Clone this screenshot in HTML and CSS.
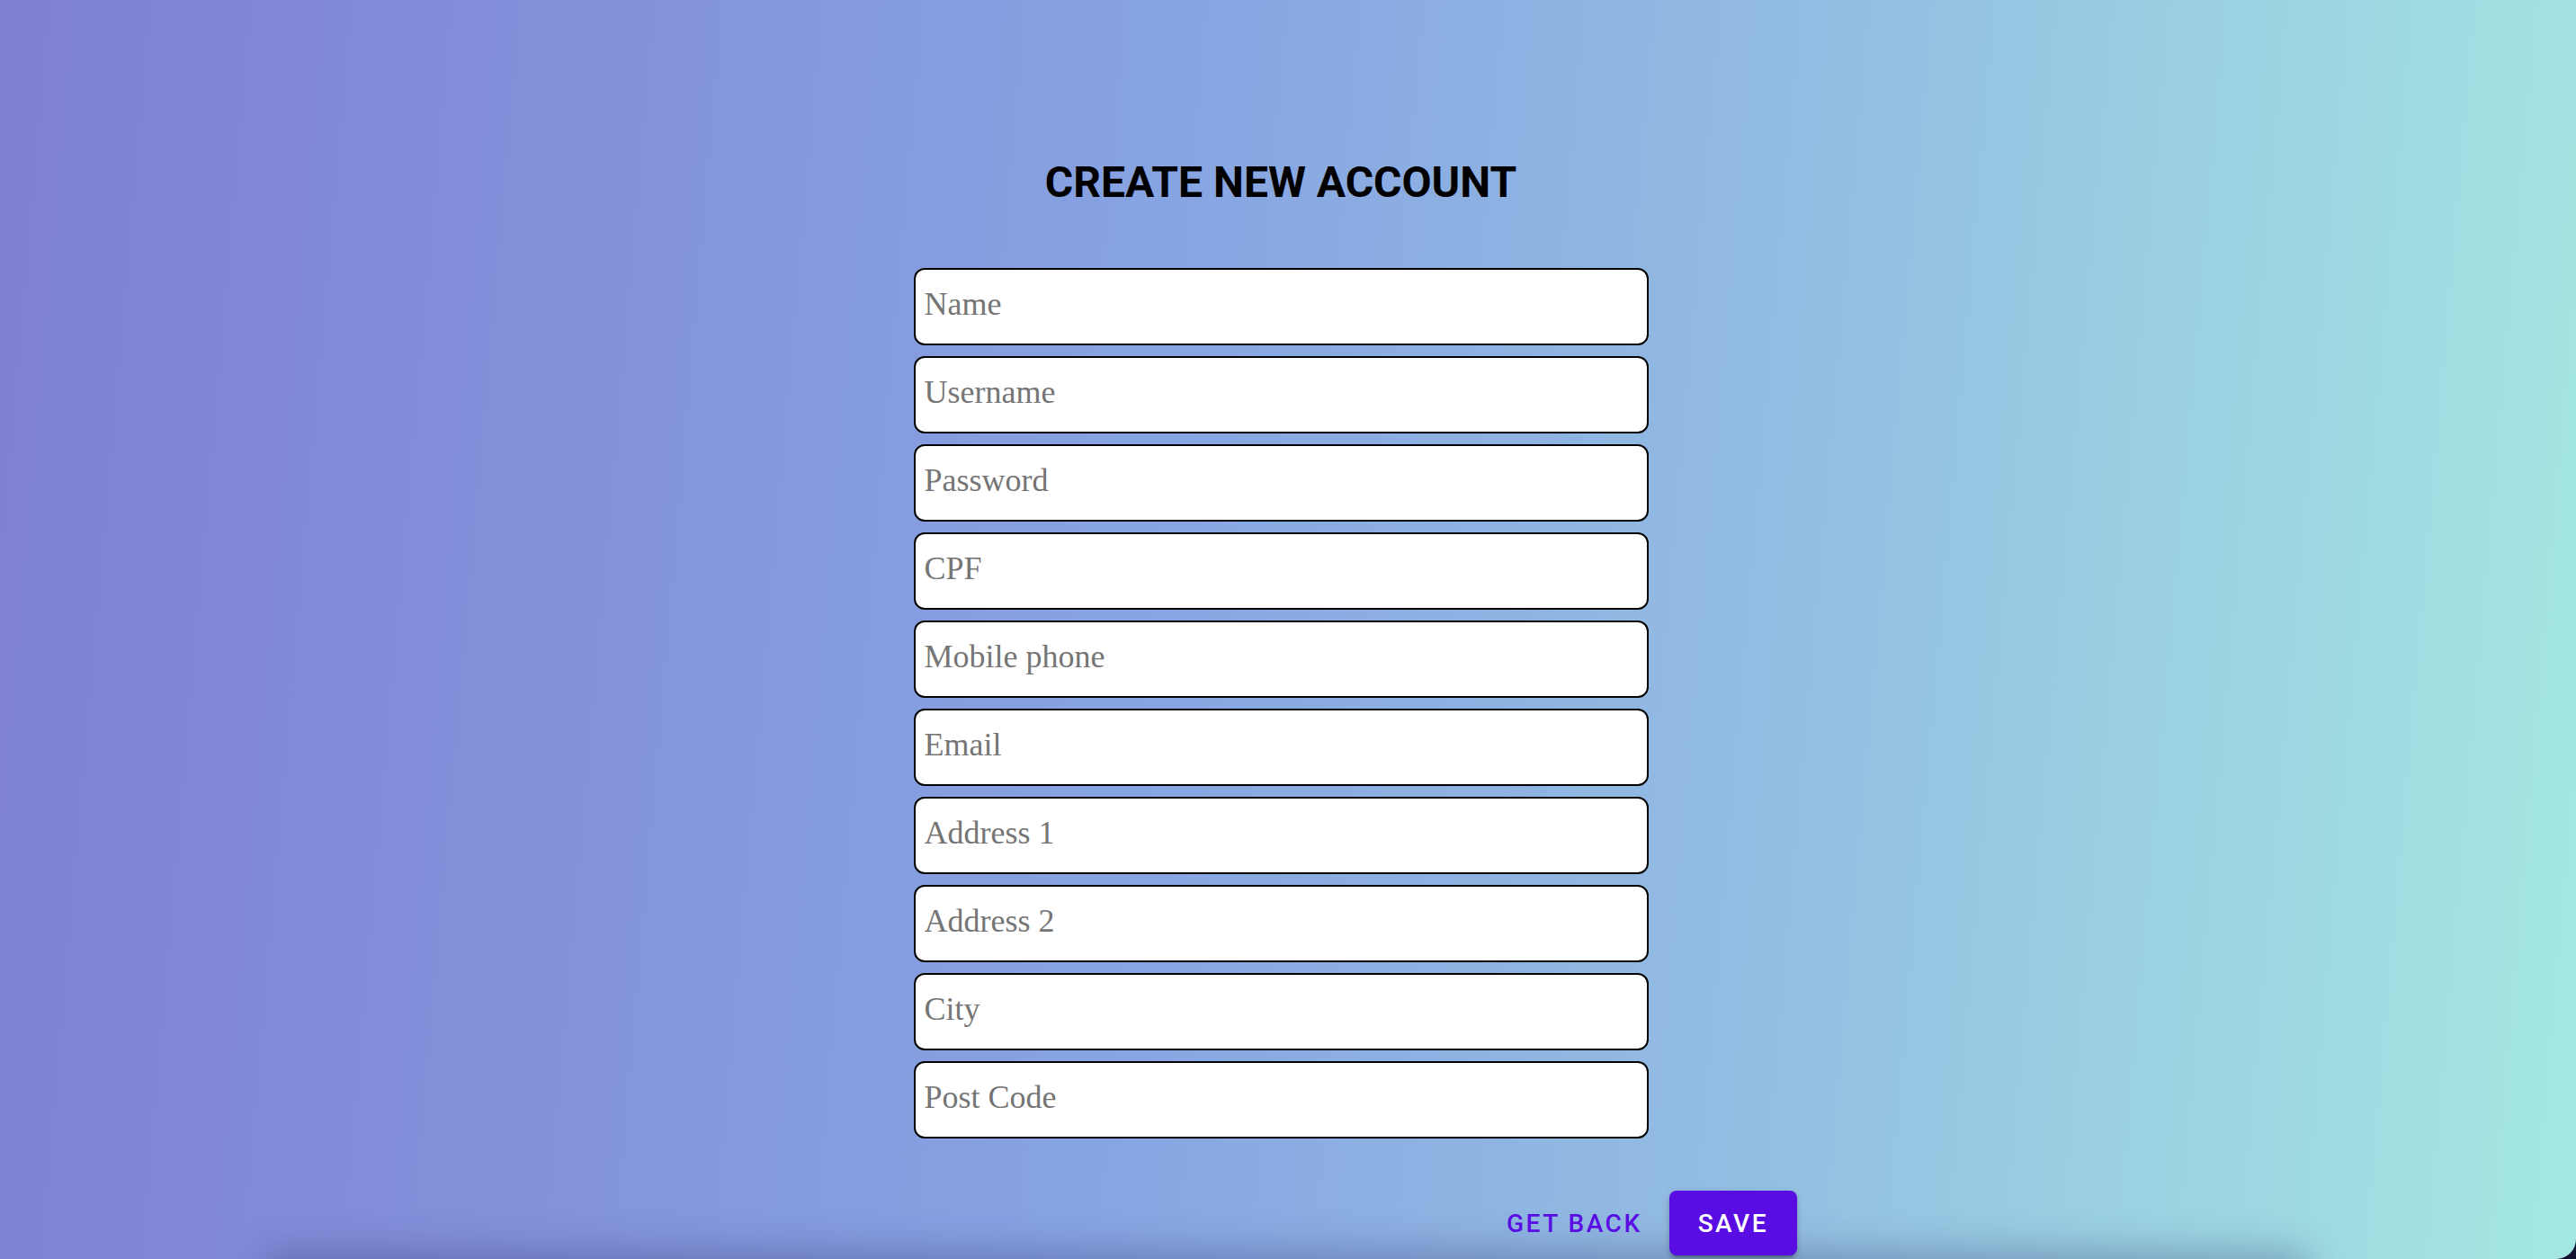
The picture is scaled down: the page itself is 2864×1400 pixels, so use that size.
FILE: index.html
```html
<!DOCTYPE html>
<html lang="en">
<head>
<meta charset="utf-8">
<title>Create new account</title>
<link rel="stylesheet" href="styles.css">
</head>
<body>
<div class="page">
  <h1 class="title">CREATE NEW ACCOUNT</h1>
  <form class="form">
    <input class="field" type="text" placeholder="Name">
    <input class="field" type="text" placeholder="Username">
    <input class="field" type="password" placeholder="Password">
    <input class="field" type="text" placeholder="CPF">
    <input class="field" type="text" placeholder="Mobile phone">
    <input class="field" type="text" placeholder="Email">
    <input class="field" type="text" placeholder="Address 1">
    <input class="field" type="text" placeholder="Address 2">
    <input class="field" type="text" placeholder="City">
    <input class="field" type="text" placeholder="Post Code">
  </form>
  <div class="actions">
    <button class="btn btn-text" type="button">Get back</button>
    <button class="btn btn-contained" type="button">Save</button>
  </div>
  <div class="floor-shadow"></div>
</div>
</body>
</html>
```

FILE: styles.css
```css
html, body {
  margin: 0;
  padding: 0;
}

body {
  background: #10122e;
  overflow: hidden;
  font-family: "Liberation Serif", "Times New Roman", serif;
}

.page {
  position: relative;
  width: 2864px;
  height: 1400px;
  box-sizing: border-box;
  padding-right: 16px;
  display: flex;
  flex-direction: column;
  align-items: center;
  overflow: hidden;
  border-bottom-right-radius: 22px;
  background: linear-gradient(95deg, #7f7fd2 0%, #86a2e2 42%, #93bde2 68%, #a4e8e2 100%);
}

.title {
  margin: 175px 0 0;
  font-family: Roboto, "Liberation Sans", sans-serif;
  font-weight: 700;
  font-size: 48px;
  line-height: 56px;
  color: #000;
  letter-spacing: 0;
}

.form {
  margin-top: 67px;
  width: 817px;
  display: flex;
  flex-direction: column;
  gap: 12px;
}

.field {
  display: block;
  width: 100%;
  height: 86px;
  box-sizing: border-box;
  margin: 0;
  padding: 0 10px 7px;
  border: 2px solid #000;
  border-radius: 12px;
  background: #fff;
  font-family: "Liberation Serif", "Times New Roman", serif;
  font-size: 36px;
  color: #000;
  outline: none;
}

.field::placeholder {
  color: #757575;
}

.actions {
  margin-top: 58px;
  width: 1148px;
  display: flex;
  justify-content: flex-end;
  gap: 14px;
  position: relative;
  z-index: 1;
}

.btn {
  height: 72px;
  box-sizing: border-box;
  border: 0;
  border-radius: 8px;
  font-family: Roboto, "Liberation Sans", sans-serif;
  font-weight: 500;
  font-size: 28px;
  letter-spacing: 0.09em;
  text-transform: uppercase;
  cursor: pointer;
}

.btn-text {
  padding: 0 16px;
  background: transparent;
  color: #5a0de3;
}

.btn-contained {
  padding: 0 32px;
  background: #5a0de3;
  color: #fff;
  box-shadow: 0 6px 2px -4px rgba(0, 0, 0, 0.2), 0 4px 4px 0 rgba(0, 0, 0, 0.14), 0 2px 10px 0 rgba(0, 0, 0, 0.12);
}

.floor-shadow {
  position: absolute;
  left: 300px;
  right: 300px;
  bottom: -40px;
  height: 40px;
  border-radius: 20px;
  box-shadow: 0 0 44px 6px rgba(40, 40, 100, 0.35);
}
```
